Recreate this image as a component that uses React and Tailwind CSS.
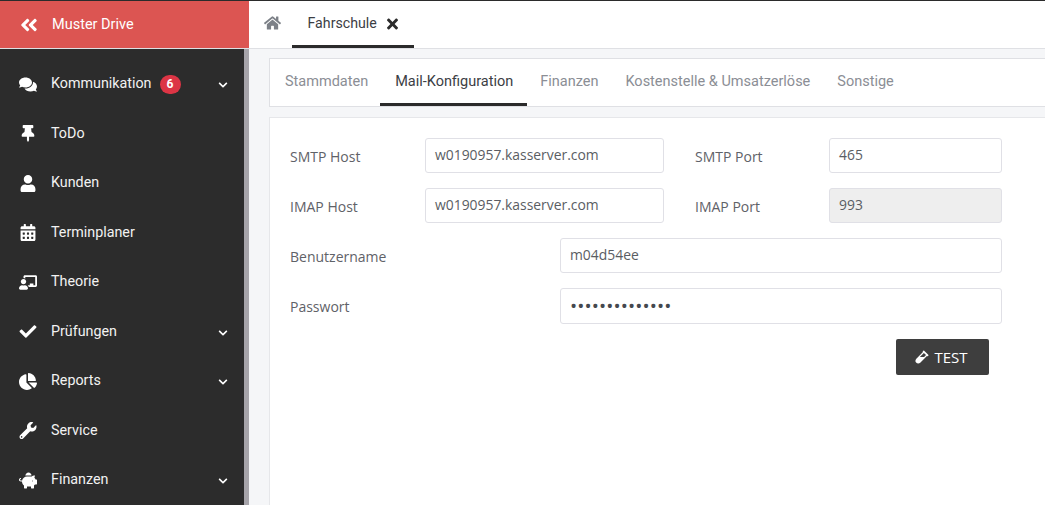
import React from 'react';
import {
  FaAngleDoubleLeft, FaComments, FaThumbtack, FaUser, FaCalendarAlt, FaChalkboardTeacher,
  FaCheck, FaChartPie, FaWrench, FaPiggyBank, FaChevronDown, FaHome, FaTimes, FaVial,
} from 'react-icons/fa';

const navItems = [
  { label: 'Kommunikation', icon: FaComments, badge: 6, caret: true },
  { label: 'ToDo', icon: FaThumbtack },
  { label: 'Kunden', icon: FaUser },
  { label: 'Terminplaner', icon: FaCalendarAlt },
  { label: 'Theorie', icon: FaChalkboardTeacher },
  { label: 'Prüfungen', icon: FaCheck, caret: true },
  { label: 'Reports', icon: FaChartPie, caret: true },
  { label: 'Service', icon: FaWrench },
  { label: 'Finanzen', icon: FaPiggyBank, caret: true },
];

const tabs = ['Stammdaten', 'Mail-Konfiguration', 'Finanzen', 'Kostenstelle & Umsatzerlöse', 'Sonstige'];

const Field = ({ value, width, disabled, password }) => (
  <div
    className={`flex items-center rounded-[3px] border border-[#e0e0e6] px-[9px] text-[#5a5d63] ${width} ${
      disabled ? 'bg-[#eeeeee]' : 'bg-white'
    } ${password ? 'h-[36px] text-[19px] tracking-[0.1px] text-[#45484e]' : 'h-[35px] pb-[1px] text-[13.9px]'}`}
  >
    {value}
  </div>
);

const Label = ({ children, width }) => (
  <div className={`pt-[8px] text-[14px] text-[#5f6268] ${width}`}>{children}</div>
);

const Sidebar = () => (
  <aside className="flex w-[249px] shrink-0 flex-col">
    <div className="flex h-[47px] items-center bg-[#dc5552] pl-[19px] text-white">
      <FaAngleDoubleLeft className="h-[20px] w-[20px]" />
      <span className="ml-[13px] text-[14.5px]">Muster Drive</span>
    </div>
    <div className="h-px bg-[#dfe0e4]" />
    <div className="flex flex-1 bg-[#a6a4aa]">
      <nav className="w-[244px] bg-[#2c2c2c] pt-[10.25px]">
        {navItems.map(({ label, icon: Icon, badge, caret }) => (
          <div key={label} className="relative flex h-[49.5px] items-center text-white">
            <div className="flex w-[51px] justify-center pl-[5px]">
              <Icon className="h-[17px] w-[18px]" />
            </div>
            <span className="text-[14.3px] text-[#f2f2f2]">{label}</span>
            {badge && (
              <span className="ml-[8px] flex h-[19px] w-[21px] items-center justify-center rounded-full bg-[#dc3545] text-[12px] font-bold">
                {badge}
              </span>
            )}
            {caret && <FaChevronDown className="absolute left-[218px] top-[21px] h-[10px] w-[10px]" />}
          </div>
        ))}
      </nav>
    </div>
  </aside>
);

const App = () => (
  <div className="flex h-[505px] w-[1045px] flex-col overflow-hidden bg-white font-['Roboto',sans-serif]">
    <div className="h-px bg-[#2b2b2b]" />
    <div className="flex min-h-0 flex-1">
      <Sidebar />
      <main className="flex min-w-0 flex-1 flex-col overflow-hidden bg-[#f5f6f8]">
        <header className="flex h-[48px] shrink-0 border-b border-[#dfe0e4] bg-white">
          <div className="flex w-[43px] items-start justify-center pl-[3px] pt-[14px]">
            <FaHome className="h-[16px] w-[17px] text-[#7c8087]" />
          </div>
          <div className="flex h-[47px] w-[122px] items-start gap-[10px] border-b-[3px] border-[#2b2b2b] pl-[15.5px] pt-[14px]">
            <span className="text-[14.2px] leading-[17px] text-[#3b3e44]">Fahrschule</span>
            <FaTimes className="mt-[1px] h-[16px] w-[11px] text-[#2b2b2b]" />
          </div>
        </header>

        <div className="ml-[20px] mt-[9px] flex h-[49px] w-[800px] shrink-0 border border-[#dfe0e4] bg-white pl-[1.5px]">
          {tabs.map((tab, i) => (
            <div
              key={tab}
              className={`flex h-[47px] items-center text-[14.5px] ${
                i === 1
                  ? '-ml-[1.5px] border-b-[3px] border-[#2b2b2b] pl-[15px] pr-[13.5px] pt-[1px] text-[#3b3e44]'
                  : 'px-[13.5px] pb-[2px] text-[#8b8e95]'
              }`}
            >
              {tab}
            </div>
          ))}
        </div>

        <div className="ml-[20px] mt-[10px] h-[420px] w-[800px] shrink-0 border border-[#e6e7ea] bg-white pl-[20px] pt-[20px] font-['Open_Sans',sans-serif]">
          <div className="flex h-[50px]">
            <Label width="w-[135px]">SMTP Host</Label>
            <Field value="w0190957.kasserver.com" width="w-[239px]" />
            <Label width="ml-[31px] w-[134px]">SMTP Port</Label>
            <Field value="465" width="w-[173px]" />
          </div>
          <div className="flex h-[50px]">
            <Label width="w-[135px]">IMAP Host</Label>
            <Field value="w0190957.kasserver.com" width="w-[239px]" />
            <Label width="ml-[31px] w-[134px]">IMAP Port</Label>
            <Field value="993" width="w-[173px]" disabled />
          </div>
          <div className="flex h-[50px]">
            <Label width="w-[270px]">Benutzername</Label>
            <Field value="m04d54ee" width="w-[442px]" />
          </div>
          <div className="flex h-[51px]">
            <Label width="w-[270px]">Passwort</Label>
            <Field value="••••••••••••••" width="w-[442px]" password />
          </div>
          <div className="flex pl-[606px]">
            <button className="flex h-[36px] w-[93px] items-center justify-center gap-[5px] rounded-[2px] bg-[#3e3e3e] pr-[2px] text-[15px] text-white">
              <FaVial className="h-[14px] w-[14px]" />
              TEST
            </button>
          </div>
        </div>
      </main>
    </div>
  </div>
);

export default App;
